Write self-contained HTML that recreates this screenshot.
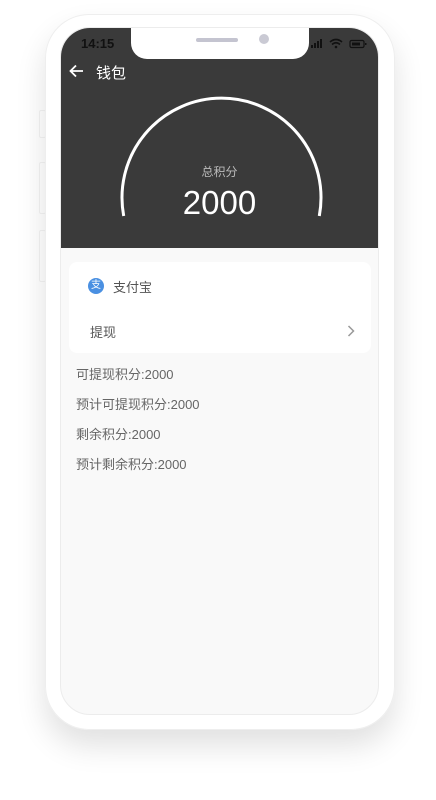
<!DOCTYPE html>
<html><head><meta charset="utf-8"><style>
*{margin:0;padding:0;box-sizing:border-box}
body{width:436px;height:800px;background:#fff;position:relative;overflow:hidden;font-family:"Liberation Sans","Noto Sans CJK SC",sans-serif}
.btn{position:absolute;left:39px;width:7px;background:#fff;border:1px solid #f3f3f3;border-radius:2px}
.phone{position:absolute;left:45px;top:14px;width:350px;height:716px;background:#fff;border-radius:44px;box-shadow:0 16px 30px rgba(0,0,0,.12),0 0 0 1px #eee inset}
.screen{position:absolute;left:60px;top:27px;width:319px;height:688px;background:#f9f9f9;border-radius:30px;overflow:hidden;border:1px solid #ececec}
.hdr{position:absolute;left:0;top:0;width:100%;height:220px;background:#3a3a3a}
.notch{position:absolute;left:70px;top:-1px;width:178px;height:32px;background:#fff;border-radius:0 0 16px 16px}
.card{position:absolute;left:8px;top:234px;width:302px;height:91px;background:#fff;border-radius:8px}
.t{position:absolute;color:#666;font-size:13px;left:15px}
</style></head><body>
<div class="btn" style="top:110px;height:28px"></div>
<div class="btn" style="top:162px;height:52px"></div>
<div class="btn" style="top:230px;height:52px"></div>
<div class="phone"></div>
<div class="screen">
 <div class="hdr">
  <div style="position:absolute;left:20px;top:8px;color:#111;font-size:13px;font-weight:bold">14:15</div>
  <svg style="position:absolute;left:250px;top:10px" width="60" height="12" viewBox="0 0 60 12">
   <rect x="0" y="7" width="2" height="3" fill="#111"/><rect x="3" y="5" width="2" height="5" fill="#111"/><rect x="6" y="3" width="2" height="7" fill="#111"/><rect x="9" y="1" width="2" height="9" fill="#111"/>
   <path d="M19 4 Q25 -1 31 4 M21 6.5 Q25 3 29 6.5" stroke="#111" stroke-width="1.6" fill="none"/><circle cx="25" cy="9" r="1.3" fill="#111"/>
   <rect x="39" y="2.5" width="14" height="7" rx="1.5" stroke="#111" stroke-width="1.2" fill="none"/><rect x="41" y="4.5" width="8" height="3" fill="#111"/><rect x="54" y="5" width="1.5" height="2" fill="#111"/>
  </svg>
  <div class="notch"><div style="position:absolute;left:65px;top:11px;width:42px;height:4px;border-radius:2px;background:#c4c4d0"></div><div style="position:absolute;left:128px;top:7px;width:10px;height:10px;border-radius:50%;background:#cacad4"></div></div>
  <svg style="position:absolute;left:8px;top:36px" width="16" height="14" viewBox="0 0 16 14"><path d="M14 7H2M7 1.5L1.5 7L7 12.5" stroke="#fff" stroke-width="1.8" fill="none"/></svg>
  <div style="position:absolute;left:35px;top:34px;color:#fff;font-size:15px">钱包</div>
  <svg style="position:absolute;left:0;top:0" width="319" height="220"><path d="M62.7 188 A99.5 99.5 0 1 1 258.3 188" stroke="#fff" stroke-width="3" fill="none"/></svg>
  <div style="position:absolute;left:0;width:100%;top:135px;text-align:center;color:#bbb;font-size:12px">总积分</div>
  <div style="position:absolute;left:0;width:100%;top:156px;text-align:center;color:#fff;font-size:33px">2000</div>
 </div>
 <div class="card">
  <div style="position:absolute;left:19px;top:16px;width:16px;height:16px;border-radius:50%;background:#4a90e2;color:#fff;font-size:10px;text-align:center;line-height:16px">支</div>
  <div style="position:absolute;left:44px;top:15px;color:#555;font-size:13px">支付宝</div>
  <div style="position:absolute;left:21px;top:60px;color:#555;font-size:13px">提现</div>
  <svg style="position:absolute;left:278px;top:63px" width="8" height="12"><path d="M1.5 1L6.5 6L1.5 11" stroke="#999" stroke-width="1.5" fill="none"/></svg>
 </div>
 <div class="t" style="top:336px">可提现积分:2000</div>
 <div class="t" style="top:366px">预计可提现积分:2000</div>
 <div class="t" style="top:396px">剩余积分:2000</div>
 <div class="t" style="top:426px">预计剩余积分:2000</div>
</div>
</body></html>
